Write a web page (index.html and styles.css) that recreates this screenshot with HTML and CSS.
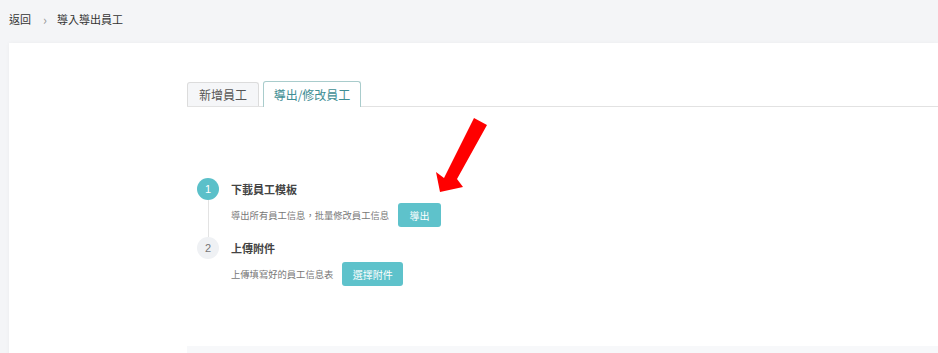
FILE: index.html
```html
<!DOCTYPE html>
<html lang="zh-Hant">
<head>
    <meta charset="UTF-8">
    <meta name="viewport" content="width=device-width, initial-scale=1.0">
    <title>導入導出員工</title>
    <link rel="stylesheet" href="styles.css">
</head>
<body>

    <div class="crumbs">
        <a class="crumb-link" href="#">返回</a>
        <span class="crumb-sep">›</span>
        <span class="crumb-current">導入導出員工</span>
    </div>

    <div class="card">
        <div class="content">
            <div class="tabs">
                <div class="tab">新增員工</div>
                <div class="tab tab-active">導出/修改員工</div>
            </div>

            <div class="steps">
                <div class="step">
                    <div class="step-side">
                        <span class="step-num step-num-active">1</span>
                        <span class="step-line"></span>
                    </div>
                    <div class="step-body">
                        <div class="step-title">下載員工模板</div>
                        <div class="step-row">
                            <span class="step-desc">導出所有員工信息，批量修改員工信息</span>
                            <button class="btn btn-export">導出</button>
                        </div>
                    </div>
                </div>
                <div class="step">
                    <div class="step-side">
                        <span class="step-num">2</span>
                    </div>
                    <div class="step-body">
                        <div class="step-title">上傳附件</div>
                        <div class="step-row">
                            <span class="step-desc">上傳填寫好的員工信息表</span>
                            <button class="btn btn-upload">選擇附件</button>
                        </div>
                    </div>
                </div>

                <svg class="pointer" width="60" height="80" viewBox="0 0 60 80">
                    <polygon points="38,0 51,7 21,61 27,69 4,74 0,54 8,60" fill="#ff0000"/>
                </svg>
            </div>

            <div class="footer"></div>
        </div>
    </div>

</body>
</html>
```

FILE: styles.css
```css
* {
    box-sizing: border-box;
}
body {
    font-family: "Noto Sans CJK TC", "Liberation Sans", sans-serif;
    background-color: #f4f5f7;
    margin: 0;
    padding: 0;
    color: #333;
}
.crumbs {
    height: 38px;
    margin-bottom: 5px;
    padding-left: 9px;
    display: flex;
    align-items: center;
    font-size: 11px;
}
.crumb-link {
    color: #333;
    text-decoration: none;
}
.crumb-sep {
    color: #999;
    margin: 0 10px 0 12px;
    font-size: 13px;
    line-height: 1;
}
.crumb-current {
    color: #333;
}
.card {
    margin-left: 9px;
    min-height: 310px;
    background-color: white;
    box-shadow: 0 0 4px rgba(0, 0, 0, 0.04);
    padding: 39px 0 0 178px;
}
.tabs {
    display: flex;
    align-items: flex-end;
    gap: 4px;
    border-bottom: 1px solid #e2e2e2;
    height: 25px;
}
.tab {
    height: 24px;
    width: 72px;
    display: flex;
    align-items: center;
    justify-content: center;
    font-size: 12px;
    color: #555;
    background-color: #f5f6f8;
    border: 1px solid #dcdcdc;
    border-bottom: none;
    border-radius: 3px 3px 0 0;
}
.tab-active {
    width: 98px;
    height: 26px;
    margin-bottom: -1px;
    background-color: white;
    color: #3e8e94;
    border-color: #a9cccc;
}
.steps {
    position: relative;
    margin-top: 71px;
    padding-left: 10px;
}
.step {
    display: flex;
}
.step-side {
    width: 22px;
    margin-right: 12px;
    display: flex;
    flex-direction: column;
    align-items: center;
}
.step-num {
    width: 22px;
    height: 22px;
    border-radius: 50%;
    background-color: #eff1f4;
    color: #777;
    font-size: 11px;
    font-family: "Liberation Sans", sans-serif;
    display: flex;
    align-items: center;
    justify-content: center;
}
.step-num-active {
    background-color: #5bc0c9;
    color: white;
}
.step-line {
    flex: 1;
    width: 1px;
    background-color: #e3e3e3;
}
.step-body {
    padding-bottom: 10px;
}
.step-title {
    height: 22px;
    line-height: 22px;
    font-size: 11px;
    font-weight: bold;
    color: #444;
}
.step-row {
    margin-top: 3px;
    display: flex;
    align-items: center;
}
.step-desc {
    font-size: 9.3px;
    color: #777;
}
.btn {
    height: 24px;
    margin-left: 9px;
    padding: 0;
    background-color: #5ec2cb;
    color: white;
    border: none;
    border-radius: 3px;
    font-family: inherit;
    font-size: 10px;
    cursor: pointer;
}
.btn-export {
    width: 43px;
}
.btn-upload {
    width: 61px;
}
.pointer {
    position: absolute;
    left: 249px;
    top: -60px;
}
.footer {
    margin-top: 50px;
    height: 20px;
    background-color: #f7f8fa;
}
```
